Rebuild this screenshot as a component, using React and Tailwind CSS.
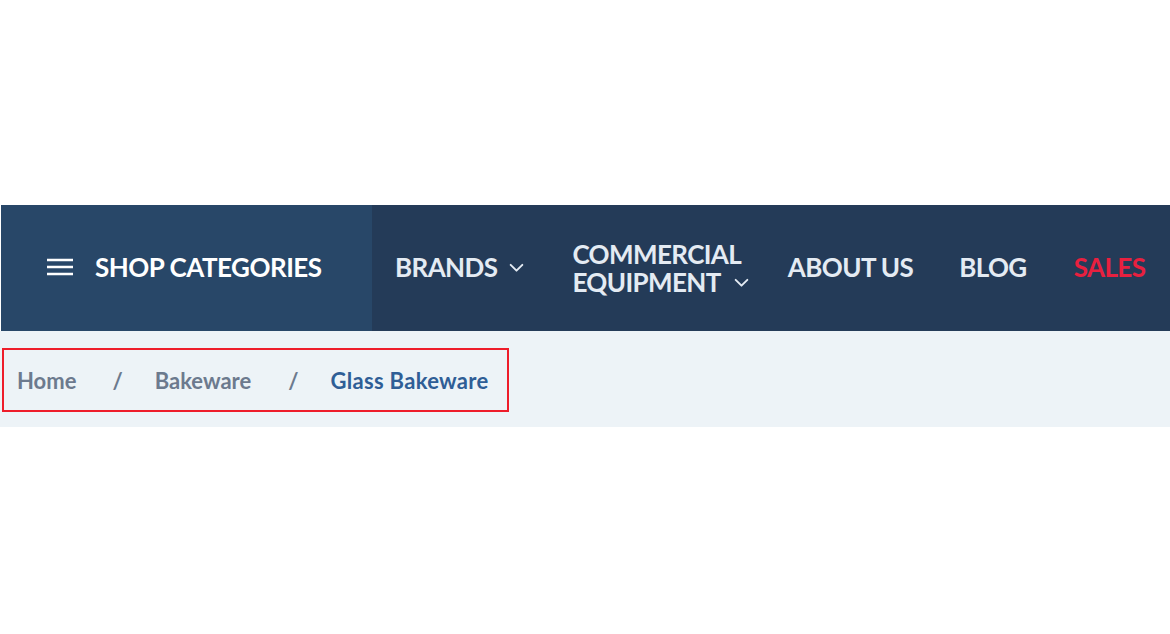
import React from "react";

const Chevron = () => (
  <svg viewBox="0 0 16 16" className="w-[17px] h-[17px]" fill="none" stroke="currentColor" strokeWidth="1.8" strokeLinecap="round" strokeLinejoin="round">
    <path d="M2.5 5.5 8 11l5.5-5.5" />
  </svg>
);

const App = () => {
  return (
    <div className="w-[1170px] h-[634px] bg-white font-['Lato',sans-serif] overflow-hidden">
      <div className="h-[205px]" />
      {/* main nav */}
      <div className="flex h-[126px] ml-[1px] whitespace-nowrap">
        <div className="w-[371px] bg-[#284768] flex items-center pl-[46px] pb-[2px] gap-[22px] text-white">
          <svg viewBox="0 0 26 18" className="w-[26px] h-[18px]" fill="none" stroke="currentColor" strokeWidth="2.4">
            <path d="M0 2h26M0 9h26M0 16h26" />
          </svg>
          <span className="text-[26px] font-bold tracking-[-0.5px]">SHOP CATEGORIES</span>
        </div>
        <div className="flex-1 bg-[#243b58] flex items-center pl-[23px] pb-[2px] text-[#e4ebf3] text-[26px] font-bold tracking-[-0.6px]">
          <div className="flex items-center gap-[11px]">
            <span>BRANDS</span>
            <Chevron />
          </div>
          <div className="ml-[47px] leading-[28px] pt-[2px]">
            <div>COMMERCIAL</div>
            <div className="flex items-center gap-[12px]">
              <span>EQUIPMENT</span>
              <Chevron />
            </div>
          </div>
          <span className="ml-[38px]">ABOUT US</span>
          <span className="ml-[46px]">BLOG</span>
          <span className="ml-[47px] text-[#e8203f]">SALES</span>
        </div>
      </div>
      {/* breadcrumb */}
      <div className="h-[96px] bg-[#edf3f7] pt-[17px] pl-[2px]">
        <div className="w-[507px] h-[64px] border-2 border-[#ee1c2a] flex items-center pl-[13px] text-[22px] font-bold">
          <span className="text-[#6c7a8e]">Home</span>
          <span className="text-[#6c7a8e] ml-[36px]">/</span>
          <span className="text-[#6c7a8e] ml-[32px]">Bakeware</span>
          <span className="text-[#6c7a8e] ml-[37px]">/</span>
          <span className="text-[#2f5e96] ml-[32px] tracking-[0.3px]">Glass Bakeware</span>
        </div>
      </div>
    </div>
  );
};

export default App;
